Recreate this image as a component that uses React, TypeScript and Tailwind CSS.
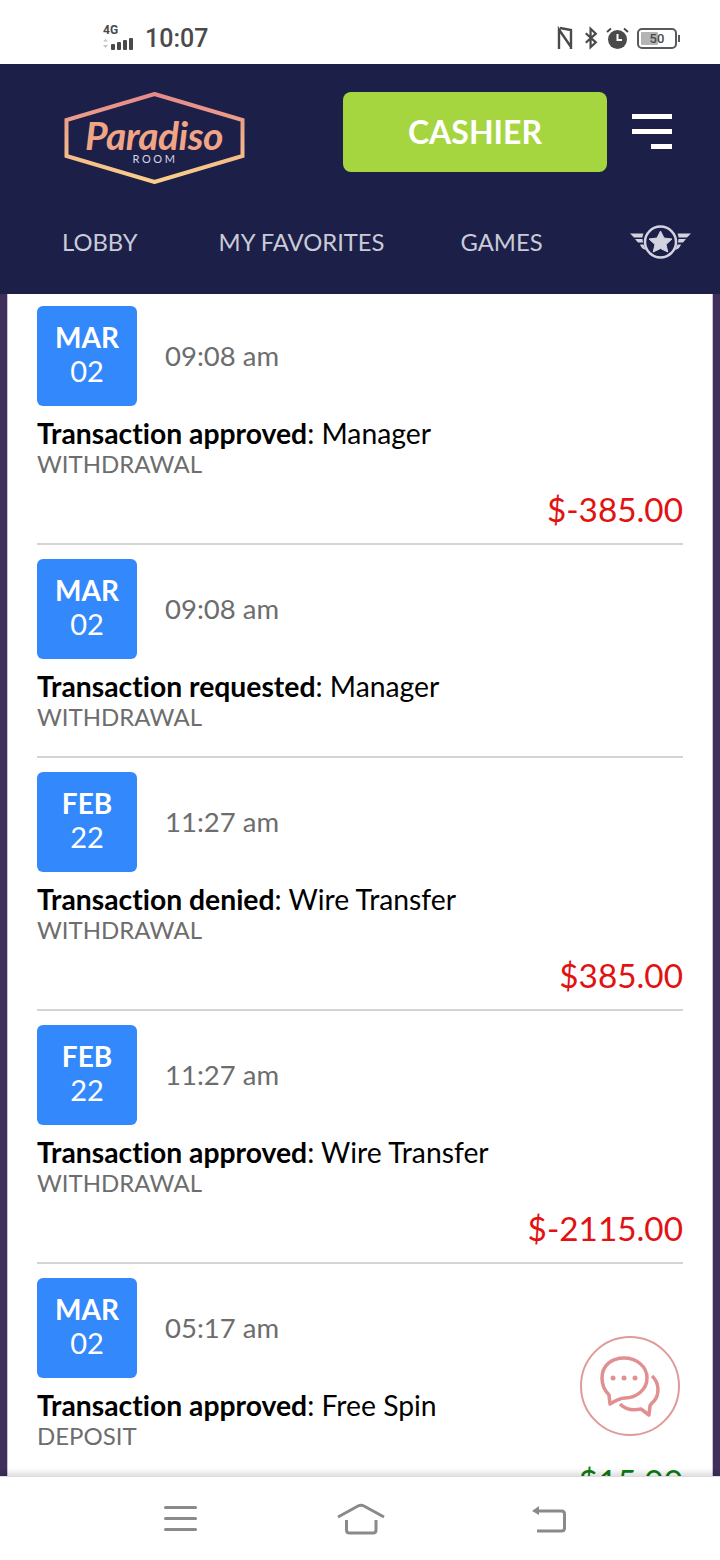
import React from "react";

interface Tx {
    month: string;
    day: string;
    time: string;
    status: string;
    method: string;
    kind: string;
    amount?: string;
    color?: string;
}

const rows: Tx[] = [
    { month: "MAR", day: "02", time: "09:08 am", status: "Transaction approved", method: "Manager", kind: "WITHDRAWAL", amount: "$-385.00" },
    { month: "MAR", day: "02", time: "09:08 am", status: "Transaction requested", method: "Manager", kind: "WITHDRAWAL" },
    { month: "FEB", day: "22", time: "11:27 am", status: "Transaction denied", method: "Wire Transfer", kind: "WITHDRAWAL", amount: "$385.00" },
    { month: "FEB", day: "22", time: "11:27 am", status: "Transaction approved", method: "Wire Transfer", kind: "WITHDRAWAL", amount: "$-2115.00" },
    { month: "MAR", day: "02", time: "05:17 am", status: "Transaction approved", method: "Free Spin", kind: "DEPOSIT", amount: "$15.00", color: "green" },
];

const StatusBar = () => (
    <div className="h-[64px] shrink-0 bg-white flex items-center pt-[12px] pl-[102px] pr-[40px] text-[#4a4a4a] font-['Roboto',sans-serif]">
        <div className="relative w-[37px] h-[24px]">
            <span className="absolute left-[1px] top-[-3px] text-[12px] font-bold leading-[14px]">4G</span>
            <svg width="37" height="24" viewBox="0 0 37 24" className="absolute left-0 top-0">
                <path d="M3.500 13 L6 15.500 H1 Z M3.500 22 L1 19 H6 Z" fill="#c4c4c4" />
                <rect x="9" y="18" width="4" height="6" rx="1" fill="#4a4a4a" />
                <rect x="15" y="16" width="4" height="8" rx="1" fill="#4a4a4a" />
                <rect x="21" y="14" width="4" height="10" rx="1" fill="#4a4a4a" />
                <rect x="27" y="12" width="4" height="12" rx="1" fill="#4a4a4a" />
            </svg>
        </div>
        <span className="ml-[6px] text-[25px] font-medium leading-none">10:07</span>
        <div className="ml-auto flex items-center">
            <svg width="16" height="24" viewBox="0 0 16 24" fill="none" stroke="#4a4a4a" strokeWidth="2.400">
                <path d="M2 23 V3.500 L14 21 M3 2 L14 4 V23" />
            </svg>
            <svg width="14" height="24" viewBox="0 0 16 24" fill="none" stroke="#4a4a4a" strokeWidth="2.500" className="ml-[11px]">
                <path d="M2 6.500 L13.500 17 L7.500 22.500 V1.500 L13.500 7 L2 17.500" />
            </svg>
            <svg width="23" height="24" viewBox="0 0 23 24" className="ml-[8px]">
                <circle cx="11.500" cy="13.500" r="9.500" fill="#4a4a4a" />
                <path d="M11.500 8 V14 H16" fill="none" stroke="#fff" strokeWidth="2" />
                <path d="M1 6 L5 2.500 M22 6 L18 2.500" stroke="#4a4a4a" strokeWidth="2" fill="none" />
            </svg>
            <div className="relative ml-[8px] mr-[3px] w-[40px] h-[21px] rounded-[5px] border-2 border-[#5a5a5a] flex items-center justify-center">
                <div className="absolute left-[2px] top-[2px] bottom-[2px] w-[17px] bg-[#b4b4b4] rounded-[1px]" />
                <span className="relative text-[13px] font-medium leading-none">50</span>
                <div className="absolute right-[-5px] top-[5px] w-[2px] h-[7px] bg-[#5a5a5a]" />
            </div>
        </div>
    </div>
);

const Logo = () => (
    <svg width="182" height="92" viewBox="0 0 182 92" className="shrink-0">
        <defs>
            <linearGradient id="frame" x1="0" y1="0" x2="0" y2="1">
                <stop offset="0" stopColor="#e58a8a" />
                <stop offset="1" stopColor="#fbd08a" />
            </linearGradient>
        </defs>
        <path d="M90.500 2 L178.500 28 V64 L90.500 90 L2.500 64 V28 Z" fill="none" stroke="url(#frame)" strokeWidth="4" />
        <text x="90" y="58" textAnchor="middle" fill="#f0a587" fontFamily="Lato, sans-serif" fontStyle="italic" fontWeight="700" fontSize="39" letterSpacing="-0.5">
            Paradiso
        </text>
        <text x="91" y="71" textAnchor="middle" fill="#d4d6e8" fontFamily="Lato, sans-serif" fontSize="11" letterSpacing="2.600">
            ROOM
        </text>
    </svg>
);

const Header = () => (
    <div className="h-[230px] shrink-0 bg-[#1c1f47]">
        <div className="flex items-start pt-[28px] pl-[64px]">
            <Logo />
            <button className="ml-[97px] w-[264px] h-[80px] rounded-[8px] bg-[#a5d63f] text-white text-[32px] font-bold">CASHIER</button>
            <div className="ml-[25px] w-[40px] mt-[22px] flex flex-col items-end gap-[10px]">
                <div className="w-[40px] h-[5px] bg-white" />
                <div className="w-[40px] h-[5px] bg-white" />
                <div className="w-[21px] h-[5px] bg-white" />
            </div>
        </div>
        <div className="flex items-center mt-[40px] pl-[62px] text-[23.800px] leading-[30px] text-[#c9cbd8]">
            <span>LOBBY</span>
            <span className="ml-[81px]">MY FAVORITES</span>
            <span className="ml-[76px]">GAMES</span>
            <svg width="62" height="36" viewBox="0 0 62 36" className="ml-[87px]" fill="#d2d3de">
                <circle cx="30.500" cy="18" r="15.500" fill="#1c1f47" stroke="#d2d3de" strokeWidth="2.500" />
                <path d="M30.500 7 L34 14 L42 15 L36 20.500 L37.800 28 L30.500 24.500 L23.200 28 L25 20.500 L19 15 L27 14 Z" stroke="#d2d3de" strokeLinejoin="round" />
                <path d="M0 9.500 L13.500 9.500 C13 11 12.500 12 12.500 13.500 L4 13.500 Z M5 15 L12.500 15 L13 18.500 L8 18.500 Z M10 20.500 L13.500 20.500 L16 26 C13 25.500 11 23.500 10 20.500 Z" />
                <path d="M61 9.500 L47.500 9.500 C48 11 48.500 12 48.500 13.500 L57 13.500 Z M56 15 L48.500 15 L48 18.500 L53 18.500 Z M51 20.500 L47.500 20.500 L45 26 C48 25.500 50 23.500 51 20.500 Z" />
            </svg>
        </div>
    </div>
);

const Row = ({ tx }: { tx: Tx }) => (
    <div className="border-b-2 border-[#d4d4d4] pt-[14px] pb-[13px]">
        <div className="flex items-center">
            <div className="w-[100px] h-[100px] pb-[4px] rounded-[6px] bg-[#3388fb] text-white flex flex-col items-center justify-center">
                <span className="text-[28px] font-bold leading-[34px]">{tx.month}</span>
                <span className="text-[29px] leading-[34px]">{tx.day}</span>
            </div>
            <span className="ml-[28px] text-[27.500px] text-[#6d6d6d] leading-none">{tx.time}</span>
        </div>
        <p className="mt-[10px] text-[28.300px] leading-[34px] text-black [font-variant-ligatures:none]">
            <b className="font-bold">{tx.status}</b>: {tx.method}
        </p>
        <p className={`text-[24px] leading-[28px] text-[#6d6d6d] ${tx.amount ? "" : "mb-[12px]"}`}>{tx.kind}</p>
        {tx.amount && (
            <p className={`mt-[10px] text-right text-[33.300px] leading-[42px] ${tx.color === "green" ? "text-[#0a7d12]" : "text-[#e21212]"}`}>
                {tx.amount}
            </p>
        )}
    </div>
);

const NavBar = () => (
    <div className="relative z-10 h-[84px] shrink-0 bg-white flex items-center pl-[164px] border-t-[1px] border-[#dcdcdc] shadow-[0_-4px_5px_rgba(0,0,0,0.12)]">
        <div className="w-[33px] flex flex-col gap-[8px]">
            <div className="h-[3px] bg-[#8a8a8a] rounded-full" />
            <div className="h-[3px] bg-[#8a8a8a] rounded-full" />
            <div className="h-[3px] bg-[#8a8a8a] rounded-full" />
        </div>
        <svg width="48" height="32" viewBox="0 0 48 32" fill="none" stroke="#8a8a8a" strokeWidth="3" className="ml-[140px]">
            <path d="M1 14 L21 3 Q24 1.500 27 3 L47 14" />
            <path d="M9.500 17 V27 Q9.500 30 12.500 30 H36 Q39 30 39 27 V17" />
        </svg>
        <svg width="36" height="30" viewBox="0 0 36 30" fill="none" stroke="#8a8a8a" strokeWidth="3" className="ml-[146px]">
            <path d="M5 7 H30.500 Q33.500 7 33.500 10 V24 Q33.500 27 30.500 27 H6" />
            <path d="M1 7 L8 2 V11 Z" fill="#8a8a8a" stroke="none" />
        </svg>
    </div>
);

export default function App() {
    return (
        <div className="w-[720px] h-[1560px] flex flex-col overflow-hidden font-['Lato',sans-serif]">
            <StatusBar />
            <Header />
            <div className="relative flex-1 min-h-0 bg-[#3f2f5a] overflow-hidden">
                <div className="mx-[7px] h-full flex flex-col bg-white border-x-[1px] border-[#c9c4d4] px-[29px]">
                    <div className="-mt-[2px]">
                        {rows.map((tx, i) => (
                            <Row key={i} tx={tx} />
                        ))}
                    </div>
                </div>
                <div className="absolute left-[580px] top-[1042px] w-[100px] h-[100px] rounded-full border-2 border-[#e09a9a] bg-white flex items-center justify-center">
                    <svg width="60" height="68" viewBox="0 0 60 68" fill="none" stroke="#e09090" strokeWidth="3.500" strokeLinejoin="round">
                        <path d="M10 52 L9 43 C4 38 2 32 2 26 C2 13 12 6 24 6 C36 6 47 14 47 26 C47 38 36 46 25 46 C21 46 18 47 10 52 Z" />
                        <circle cx="13" cy="26" r="2.500" fill="#e09090" stroke="none" />
                        <circle cx="24" cy="26" r="2.500" fill="#e09090" stroke="none" />
                        <circle cx="35" cy="26" r="2.500" fill="#e09090" stroke="none" />
                        <path d="M52 24 C59 30 60 42 54 49 C52 51 50 53 50 54 L49 63 L41 57 C32 59 25 57 20 52" />
                    </svg>
                </div>
            </div>
            <NavBar />
        </div>
    );
}
